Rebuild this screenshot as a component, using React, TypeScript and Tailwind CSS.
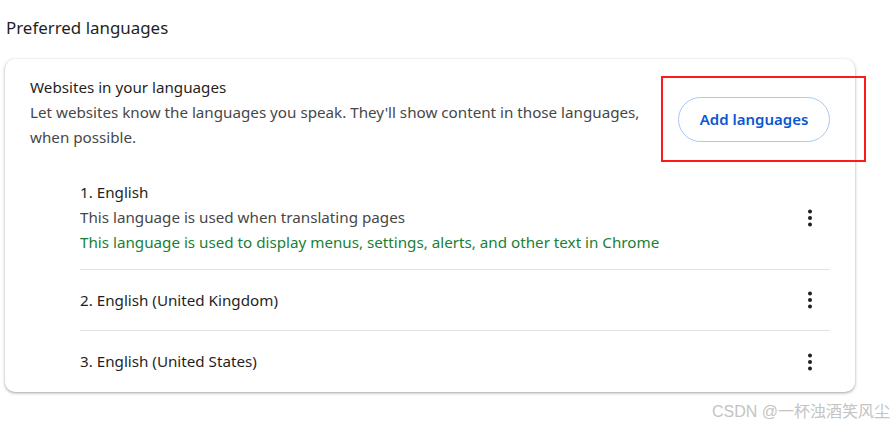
import React from 'react';

const languages = [
  {
    name: '1. English',
    lines: [
      { text: 'This language is used when translating pages', tone: 'muted' },
      { text: 'This language is used to display menus, settings, alerts, and other text in Chrome', tone: 'green' },
    ],
  },
  { name: '2. English (United Kingdom)', lines: [] },
  { name: '3. English (United States)', lines: [] },
];

const Kebab = () => (
  <button className="flex h-[40px] w-[40px] items-center justify-center rounded-full">
    <svg width="12" height="20" viewBox="0 0 12 20" fill="#1f1f1f">
      <circle cx="6" cy="3.5" r="2" />
      <circle cx="6" cy="10" r="2" />
      <circle cx="6" cy="16.5" r="2" />
    </svg>
  </button>
);

export default function App() {
  return (
    <div className="relative h-[428px] w-[896px] overflow-hidden bg-white font-['Noto_Sans',sans-serif] text-[#1f1f1f]">
      {/* Section title */}
      <h2 className="pl-[6px] pt-[16px] text-[16.9px] leading-[24px]">Preferred languages</h2>

      {/* Card */}
      <div className="relative ml-[5px] mt-[19px] w-[850px] rounded-[10px] bg-white pt-[16px] shadow-[0_1px_2px_rgba(60,64,67,0.3),0_1px_3px_1px_rgba(60,64,67,0.15)]">
        <div className="flex items-start justify-between px-[25px]">
          <div className="w-[625px] text-[15.2px] leading-[25px]">
            <div>Websites in your languages</div>
            <div className="text-[#474747]">
              Let websites know the languages you speak. They'll show content in those languages, when possible.
            </div>
          </div>
          <button className="mt-[22px] h-[45px] w-[152px] shrink-0 rounded-full border border-[#a8c7fa] text-[15px] font-semibold text-[#0b57d0]">
            Add languages
          </button>
        </div>

        {/* Red annotation box */}
        <div className="absolute left-[656px] top-[17px] h-[86px] w-[205px] border-2 border-[#ff1a1a]" />

        <div className="mt-[30px] pl-[75px] pr-[25px]">
          {languages.map((lang, i) => (
            <div
              key={lang.name}
              className={`flex items-center justify-between text-[15.2px] leading-[25px] ${
                i === 0 ? 'pb-[14px]' : 'h-[61px]'
              } ${i < languages.length - 1 ? 'border-b border-[#e3e3e3]' : ''}`}
            >
              <div>
                <div>{lang.name}</div>
                {lang.lines.map((l) => (
                  <div key={l.text} className={l.tone === 'green' ? 'text-[#188038]' : 'text-[#474747]'}>
                    {l.text}
                  </div>
                ))}
              </div>
              <Kebab />
            </div>
          ))}
        </div>
      </div>

      {/* Watermark */}
      <div className="absolute right-[6px] top-[401px] font-['Liberation_Sans','Noto_Sans_CJK_SC',sans-serif] text-[16px] leading-[22px] text-[#c4c4c4]">
        CSDN @一杯浊酒笑风尘
      </div>
    </div>
  );
}
